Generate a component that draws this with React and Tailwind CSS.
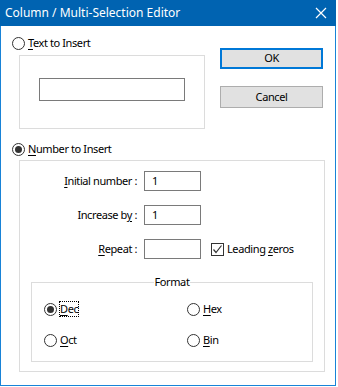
import React from "react";

const font = { fontFamily: '"Segoe UI", "Noto Sans", sans-serif' };

function U({ children }) {
  return <span className="underline underline-offset-[2px] decoration-1">{children}</span>;
}

function Radio({ checked, children, focus }) {
  return (
    <div className="flex items-center h-[14px]">
      <div className="w-[13px] h-[13px] rounded-full border border-[#333] bg-white flex items-center justify-center shrink-0">
        {checked && <div className="w-[7px] h-[7px] rounded-full bg-[#333]" />}
      </div>
      <span
        className={
          "ml-[3px] leading-[14px] " +
          (focus ? "outline outline-1 outline-dotted outline-black" : "")
        }
      >
        {children}
      </span>
    </div>
  );
}

function Button({ children, primary, className = "" }) {
  return (
    <div
      className={
        "w-[103px] flex items-center justify-center bg-[#e1e1e1] text-black " +
        (primary ? "h-[21px] border-2 border-[#0078d7]" : "h-[22px] border border-[#adadad]") +
        " " +
        className
      }
    >
      {children}
    </div>
  );
}

function Field({ value }) {
  return (
    <div className="w-[57px] h-[20px] border border-[#7a7a7a] bg-white flex items-center pl-[7px]">
      {value}
    </div>
  );
}

export default function App() {
  return (
    <div className="w-[338px] h-[387px] bg-white text-[11px] tracking-[-0.4px] text-black" style={font}>
      <div className="w-[336px] h-[386px] border border-t-0 border-[#1883d7] flex flex-col">
        <div className="h-[26px] bg-[#0063b1] flex items-center justify-between -mx-px px-[5px] text-white text-[12px] tracking-normal">
          <span>Column / Multi-Selection Editor</span>
          <svg width="12" height="12" viewBox="0 0 12 12" className="mr-[4px]">
            <path d="M1 1 L11 11 M11 1 L1 11" stroke="white" strokeWidth="1.2" />
          </svg>
        </div>
        <div className="flex-1 bg-white pl-[11px] pt-[10px]">
          <div className="flex">
            <div className="w-[192px]">
              <Radio>
                <U>T</U>ext to Insert
              </Radio>
              <div className="ml-[7px] mt-[5px] w-[186px] h-[74px] border border-[#dcdcdc] pl-[19px] pt-[22px]">
                <div className="w-[146px] h-[23px] border border-[#7a7a7a] bg-white" />
              </div>
            </div>
            <div className="ml-[16px] pt-[12px] flex flex-col gap-[17px]">
              <Button primary>OK</Button>
              <Button>Cancel</Button>
            </div>
          </div>
          <div className="mt-[13px]">
            <Radio checked>
              <U>N</U>umber to Insert
            </Radio>
          </div>
          <div className="ml-[7px] mt-[4px] w-[306px] h-[212px] border border-[#dcdcdc] pt-[10px]">
            <div className="grid grid-cols-[117px_57px_auto] gap-x-[7px] gap-y-[14px] items-center">
              <div className="text-right">
                <U>I</U>nitial number :
              </div>
              <Field value="1" />
              <div />
              <div className="text-right">
                Increase b<U>y</U> :
              </div>
              <Field value="1" />
              <div />
              <div className="text-right">
                <U>R</U>epeat :
              </div>
              <Field value="" />
              <div className="flex items-center ml-[3px]">
                <div className="w-[13px] h-[13px] border border-[#333] bg-white flex items-center justify-center">
                  <svg width="11" height="11" viewBox="0 0 11 11">
                    <path d="M1.5 5.5 L4 8.5 L9.5 1.5" stroke="#333" strokeWidth="1.2" fill="none" />
                  </svg>
                </div>
                <span className="ml-[3px]">
                  Leading <U>z</U>eros
                </span>
              </div>
            </div>
            <div className="ml-[11px] mt-[23px] w-[282px] h-[80px] border border-[#dcdcdc] relative">
              <div className="flex justify-center -mt-[8px]">
                <span className="bg-white px-[1px] leading-[14px]">Format</span>
              </div>
              <div className="grid grid-cols-[143px_auto] gap-y-[17px] pl-[12px] pt-[13px]">
                <Radio checked focus>
                  <U>D</U>ec
                </Radio>
                <Radio>
                  <U>H</U>ex
                </Radio>
                <Radio>
                  <U>O</U>ct
                </Radio>
                <Radio>
                  <U>B</U>in
                </Radio>
              </div>
            </div>
          </div>
        </div>
      </div>
    </div>
  );
}
